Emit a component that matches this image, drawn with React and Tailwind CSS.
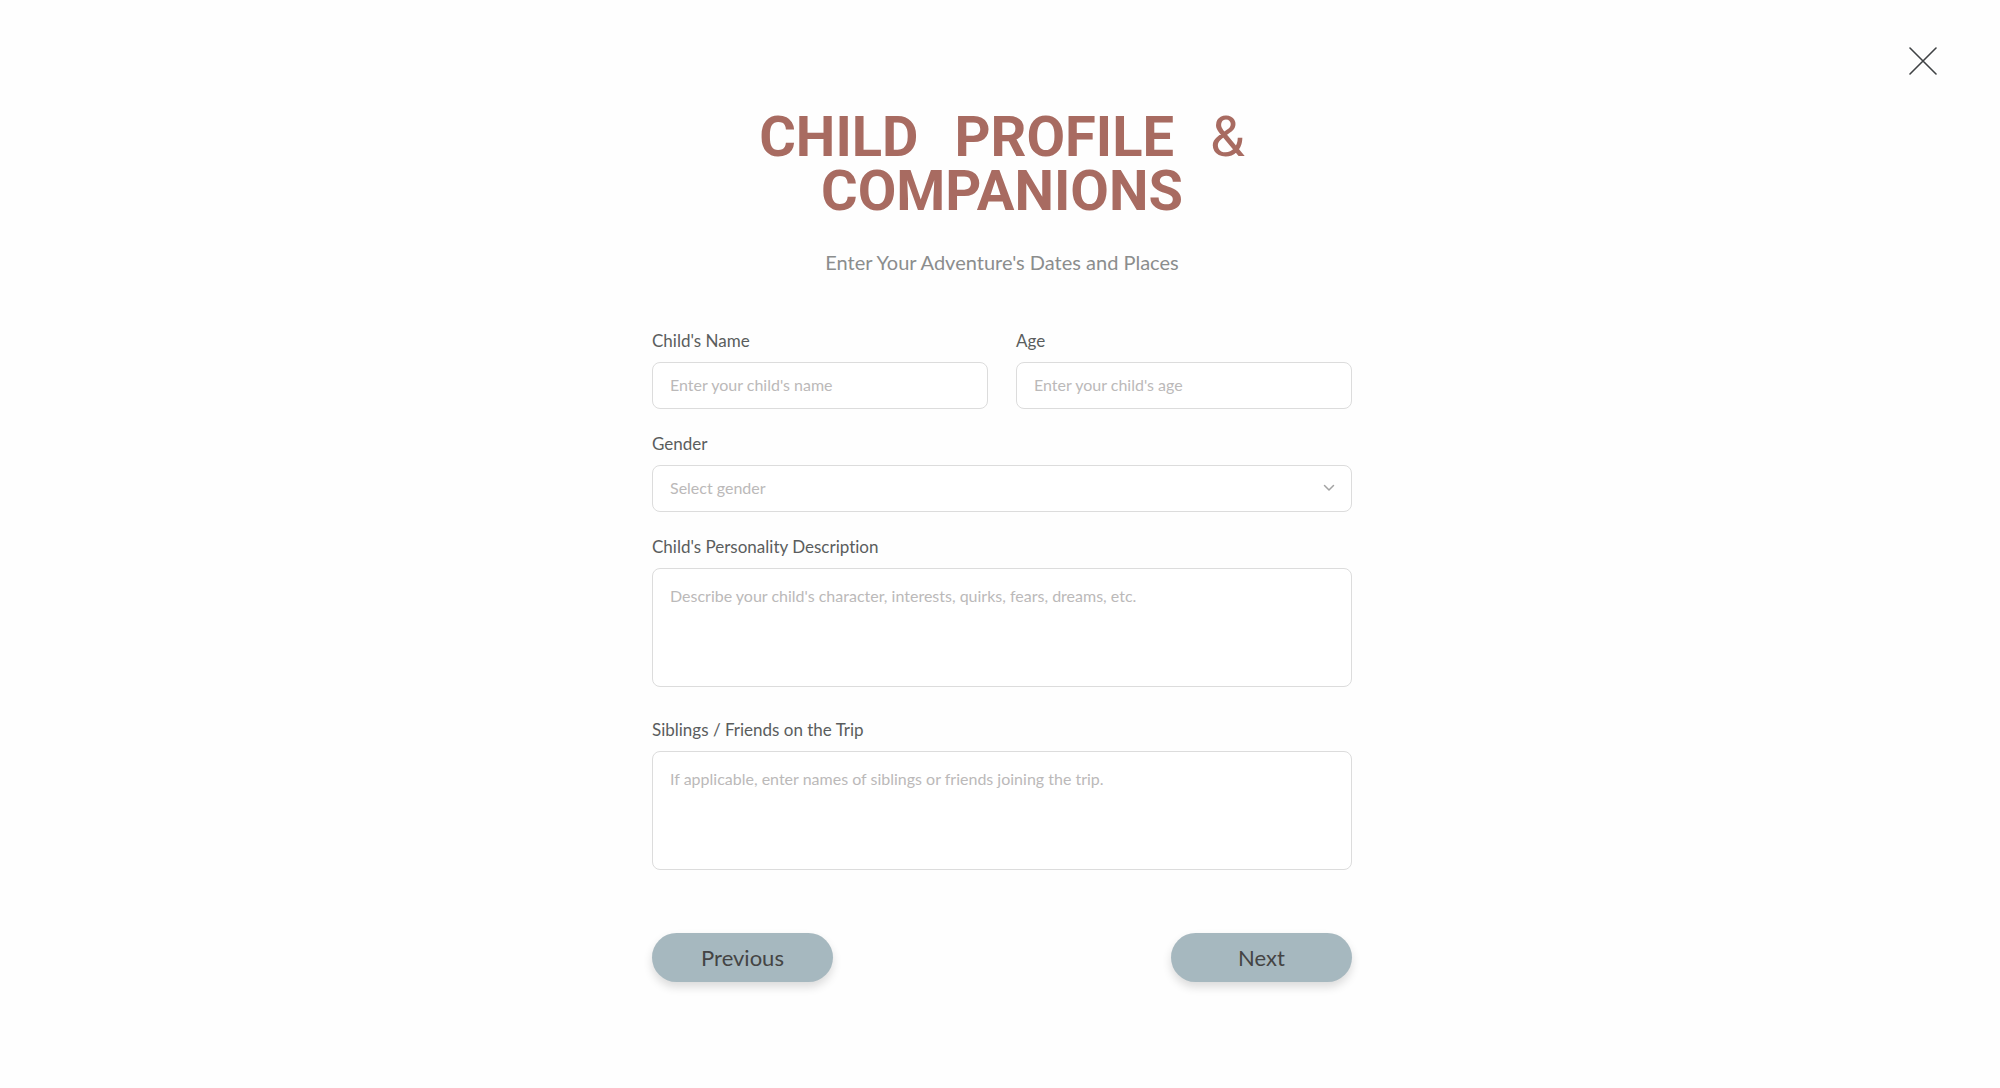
import { useState } from 'react'

const fieldClass =
  'block w-full rounded-lg border border-[#dcdcdc] bg-white px-[17px] text-[16px] text-[#4a4a4a] placeholder:text-[#bbb9b9] placeholder:opacity-100 focus:outline-none focus:border-[#a6b8bf]'

const buttonClass =
  'h-[49px] w-[181px] rounded-full bg-[#a6b8bf] text-[22px] text-[#444444] shadow-[0_5px_10px_rgba(0,0,0,0.14)] hover:bg-[#98acb4] transition'

function Field({ id, label, className = '', children }) {
  return (
    <div className={className}>
      <label htmlFor={id} className="mb-[9px] block text-[17px] leading-6 text-[#5a5d5d]">
        {label}
      </label>
      {children}
    </div>
  )
}

function CloseIcon() {
  return (
    <svg width="28" height="28" viewBox="0 0 28 28" fill="none" stroke="#3f4244" strokeWidth="1.6" strokeLinecap="round">
      <path d="M1 1L27 27M27 1L1 27" />
    </svg>
  )
}

function ChevronIcon() {
  return (
    <svg
      className="pointer-events-none absolute right-[17px] top-[19px]"
      width="12"
      height="8"
      viewBox="0 0 12 8"
      fill="none"
      stroke="#a3a3a3"
      strokeWidth="1.5"
      strokeLinecap="round"
      strokeLinejoin="round"
    >
      <path d="M1.5 1.5L6 6L10.5 1.5" />
    </svg>
  )
}

export default function App() {
  const [form, setForm] = useState({ name: '', age: '', gender: '', personality: '', companions: '' })

  const handleChange = (e) => {
    setForm({ ...form, [e.target.id]: e.target.value })
  }

  return (
    <main className="relative min-h-screen bg-[#fefefe] pl-1 font-['Lato','Open_Sans',sans-serif] [font-variant-ligatures:none]">
      <button type="button" aria-label="Close" className="absolute right-[63px] top-[47px]">
        <CloseIcon />
      </button>

      <form className="mx-auto max-w-[700px] pt-[110px] pb-24" onSubmit={(e) => e.preventDefault()}>
        <h1 className="flex flex-wrap justify-center gap-x-9 px-20 text-center font-['Roboto','Open_Sans',sans-serif] text-[56px] font-bold uppercase leading-[54px] text-[#a86b61]">
          <span>Child</span> <span>Profile</span> <span className="font-normal">&amp;</span> <span>Companions</span>
        </h1>
        <p className="mt-8 text-center text-[20px] leading-6 text-[#8b8d8d]">
          Enter Your Adventure's Dates and Places
        </p>

        <div className="mt-[55px] grid grid-cols-2 gap-x-7 gap-y-[23px]">
          <Field id="name" label="Child's Name">
            <input
              id="name"
              type="text"
              placeholder="Enter your child's name"
              value={form.name}
              onChange={handleChange}
              className={`${fieldClass} h-[47px] pb-0.5`}
            />
          </Field>
          <Field id="age" label="Age">
            <input
              id="age"
              type="text"
              placeholder="Enter your child's age"
              value={form.age}
              onChange={handleChange}
              className={`${fieldClass} h-[47px] pb-0.5`}
            />
          </Field>
          <Field id="gender" label="Gender" className="col-span-2">
            <div className="relative">
              <select
                id="gender"
                value={form.gender}
                onChange={handleChange}
                className={`${fieldClass} h-[47px] appearance-none pb-0.5 ${form.gender ? '' : 'text-[#bbb9b9]'}`}
              >
                <option value="">Select gender</option>
                <option value="girl">Girl</option>
                <option value="boy">Boy</option>
              </select>
              <ChevronIcon />
            </div>
          </Field>
          <Field id="personality" label="Child's Personality Description" className="col-span-2">
            <textarea
              id="personality"
              placeholder="Describe your child's character, interests, quirks, fears, dreams, etc."
              value={form.personality}
              onChange={handleChange}
              className={`${fieldClass} h-[119px] resize-none py-[15px] leading-6`}
            />
          </Field>
          <Field id="companions" label="Siblings / Friends on the Trip" className="col-span-2 mt-2">
            <textarea
              id="companions"
              placeholder="If applicable, enter names of siblings or friends joining the trip."
              value={form.companions}
              onChange={handleChange}
              className={`${fieldClass} h-[119px] resize-none py-[15px] leading-6`}
            />
          </Field>
        </div>

        <div className="mt-[63px] flex justify-between">
          <button type="button" className={buttonClass}>
            Previous
          </button>
          <button type="submit" className={buttonClass}>
            Next
          </button>
        </div>
      </form>
    </main>
  )
}
